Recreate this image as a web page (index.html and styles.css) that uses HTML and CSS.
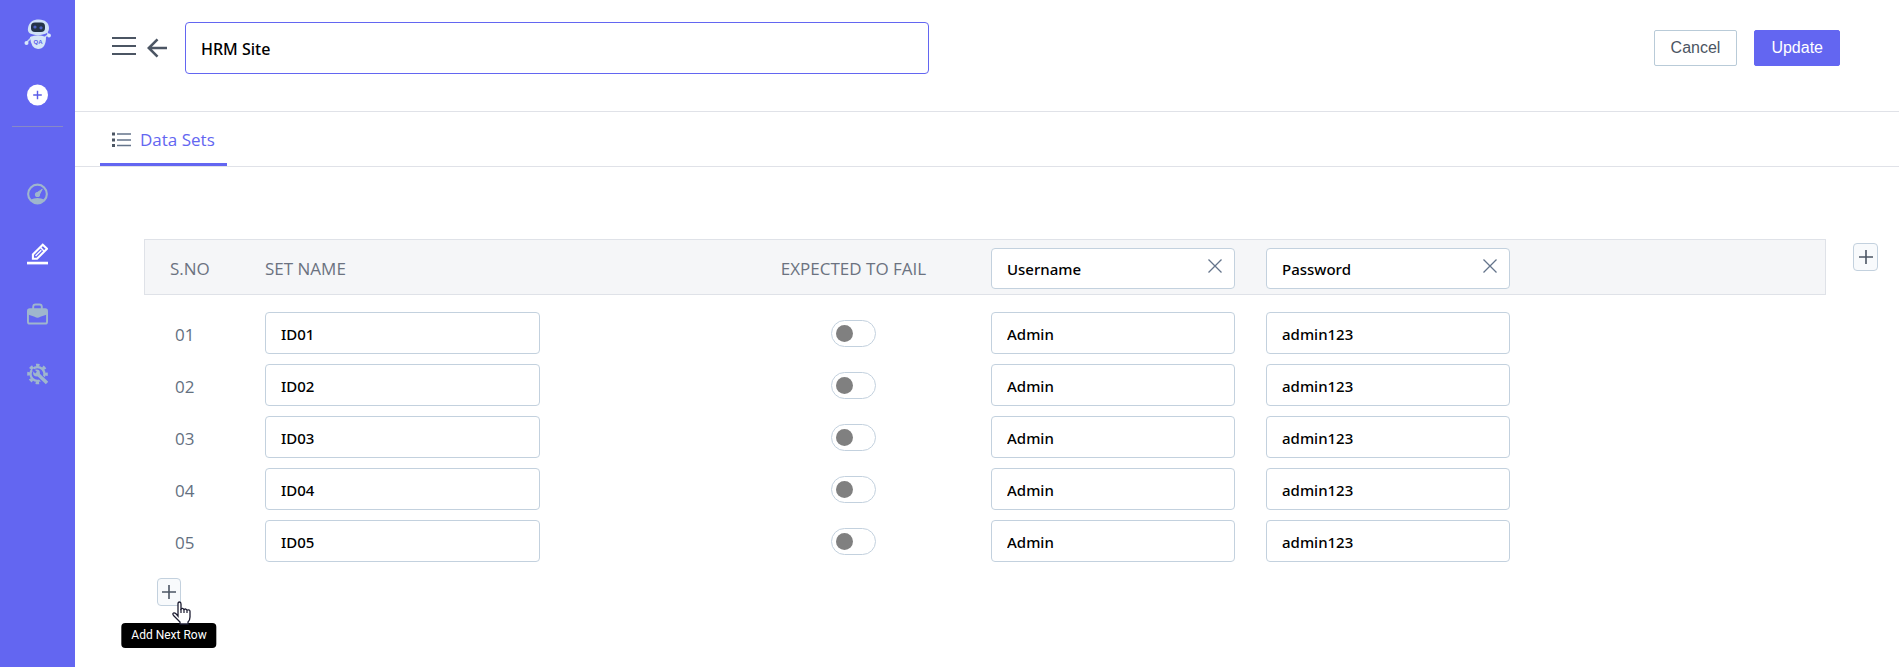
FILE: index.html
```html
<!DOCTYPE html>
<html lang="en">
<head>
<meta charset="utf-8">
<meta name="viewport" content="width=device-width, initial-scale=1">
<title>HRM Site - Data Sets</title>
<link rel="stylesheet" href="styles.css">
</head>
<body>
<div class="app">
  <nav class="sidebar" aria-label="Main">
    <a class="logo" href="#" aria-label="Home">
      <svg width="28" height="32" viewBox="0 0 28 32">
        <path d="M8 18 3 23M21 18l4-3" stroke="#c5d6f5" stroke-width="1.500" fill="none"/>
        <circle cx="2.500" cy="24" r="2" fill="#d9e8fa"/>
        <circle cx="25" cy="16.500" r="1.900" fill="#d9e8fa"/>
        <path d="M24 15l-1-2" stroke="#d9e8fa"/>
        <path d="M6 18Q14 14.500 22 18 22 30 14 30 7 30 6 18Z" fill="#d5e5f8"/>
        <path d="M4 9C5 3 9 .5 15 .5s10 3.500 10 8.500-4 7-11 7S3 14 4 9Z" fill="#cfe1f7"/>
        <rect x="7" y="3.500" width="14" height="9.500" rx="4" fill="#243447"/>
        <circle cx="11" cy="8" r="1.600" fill="#4d63c4"/>
        <circle cx="17" cy="8.800" r="1.600" fill="#4d63c4"/>
        <text class="logo-text" x="14" y="25" text-anchor="middle">QA</text>
      </svg>
    </a>
    <button class="create" type="button" aria-label="Create">
      <svg width="21" height="22" viewBox="0 0 22 22"><circle cx="11" cy="11" r="11" fill="#fff"/><path d="M11 6.500v9M6.500 11h9" stroke="#5a5de8" stroke-width="1.500"/></svg>
    </button>
    <div class="links">
      <a href="#" aria-label="Dashboard"><svg width="21" height="22" viewBox="0 0 22 22"><circle cx="11" cy="11" r="9.800" fill="none" stroke="currentColor" stroke-width="2.200"/><path d="M3.500 17Q11 13.500 18.500 17 15 21.500 11 21.500T3.500 17Z" fill="currentColor"/><circle cx="11" cy="11.500" r="2.700" fill="currentColor"/><path d="M10 10 16 6 12.500 12.500Z" fill="currentColor" stroke="currentColor"/></svg></a>
      <a class="current" href="#" aria-label="Edit"><svg width="21" height="22" viewBox="0 0 22 22"><path d="M6.200 16v-4.500L16.500 1.300 21 5.500 10.500 16Z" fill="none" stroke="currentColor" stroke-width="2.200"/><path d="m9 13 6-6M14 4l4 4" stroke="currentColor" stroke-width="1.500"/><path d="M0 20.500h22" stroke="currentColor" stroke-width="2.800"/></svg></a>
      <a href="#" aria-label="Projects"><svg width="21" height="22" viewBox="0 0 22 22"><path d="M6.500 6V3.500Q6.500 1 9 1h4q2.500 0 2.500 2.500V6" fill="none" stroke="currentColor" stroke-width="2"/><rect x="1" y="6" width="20" height="15" rx="2" fill="none" stroke="currentColor" stroke-width="2"/><path d="M1 6h20v5.500L14 14q-3 2-6 0l-7-2.500Z" fill="currentColor"/></svg></a>
      <a href="#" aria-label="Settings"><svg width="21" height="22" viewBox="0 0 22 22"><circle cx="11" cy="11" r="7.300" fill="none" stroke="currentColor" stroke-width="2.400"/><circle cx="11" cy="11" r="9.300" fill="none" stroke="currentColor" stroke-width="3" stroke-dasharray="3.650 3.650" stroke-dashoffset="1.800"/><path d="m11 11 10 10" stroke="#6366f1" stroke-width="6"/><path d="m10 10 11 10.500" stroke="currentColor" stroke-width="3.600"/><circle cx="10" cy="10" r="3.600" fill="currentColor"/><path d="M6 6l3.500 3.500" stroke="#6366f1" stroke-width="2.400"/></svg></a>
    </div>
  </nav>

  <main class="main">
    <header class="topbar">
      <button class="icon-btn" type="button" aria-label="Menu"><svg width="24" height="20" viewBox="0 0 24 20"><path d="M0 2h24M0 10h24M0 18h24" stroke="currentColor" stroke-width="2"/></svg></button>
      <a class="icon-btn back" href="#" aria-label="Back"><svg width="20" height="20" viewBox="0 0 20 20"><path d="M20 10H2M10.500 1.300 1.800 10l8.700 8.700" fill="none" stroke="currentColor" stroke-width="2.600"/></svg></a>
      <input class="field title" type="text" value="HRM Site" aria-label="Name">
      <div class="actions">
        <button class="btn" type="button">Cancel</button>
        <button class="btn primary" type="button">Update</button>
      </div>
    </header>

    <div class="tabs">
      <a class="tab" href="#"><svg width="19" height="15" viewBox="0 0 19 15"><path d="M0 2h3M0 8h3M0 13.500h3" stroke="#4b5563" stroke-width="3"/><path d="M5 2h14M5 8h14M5 13.500h14" stroke="#64748b" stroke-width="1.500"/></svg>Data Sets</a>
    </div>

    <section class="content">
      <div class="sheet">
        <table class="grid">
          <colgroup><col class="c-no"><col class="c-name"><col class="c-var"><col class="c-var"><col class="c-var"><col></colgroup>
          <thead>
            <tr>
              <th scope="col" class="no">S.NO</th>
              <th scope="col">SET NAME</th>
              <th scope="col" class="center">EXPECTED TO FAIL</th>
              <th scope="col"><div class="var"><input class="field" type="text" value="Username" aria-label="Column 1 name"><button class="remove" type="button" aria-label="Remove Username"><svg width="14" height="14" viewBox="0 0 14 14"><path d="m.5.5 13 13M13.500.5l-13 13" stroke="currentColor" stroke-width="1.300"/></svg></button></div></th>
              <th scope="col"><div class="var"><input class="field" type="text" value="Password" aria-label="Column 2 name"><button class="remove" type="button" aria-label="Remove Password"><svg width="14" height="14" viewBox="0 0 14 14"><path d="m.5.5 13 13M13.500.5l-13 13" stroke="currentColor" stroke-width="1.300"/></svg></button></div></th>
              <td></td>
            </tr>
          </thead>
          <tbody>
            <tr><td class="no">01</td><td><input class="field name" type="text" value="ID01" aria-label="Set name 01"></td><td class="center"><input class="toggle" type="checkbox" role="switch" aria-label="Expected to fail 01"></td><td><input class="field" type="text" value="Admin" aria-label="Username 01"></td><td><input class="field" type="text" value="admin123" aria-label="Password 01"></td><td></td></tr>
            <tr><td class="no">02</td><td><input class="field name" type="text" value="ID02" aria-label="Set name 02"></td><td class="center"><input class="toggle" type="checkbox" role="switch" aria-label="Expected to fail 02"></td><td><input class="field" type="text" value="Admin" aria-label="Username 02"></td><td><input class="field" type="text" value="admin123" aria-label="Password 02"></td><td></td></tr>
            <tr><td class="no">03</td><td><input class="field name" type="text" value="ID03" aria-label="Set name 03"></td><td class="center"><input class="toggle" type="checkbox" role="switch" aria-label="Expected to fail 03"></td><td><input class="field" type="text" value="Admin" aria-label="Username 03"></td><td><input class="field" type="text" value="admin123" aria-label="Password 03"></td><td></td></tr>
            <tr><td class="no">04</td><td><input class="field name" type="text" value="ID04" aria-label="Set name 04"></td><td class="center"><input class="toggle" type="checkbox" role="switch" aria-label="Expected to fail 04"></td><td><input class="field" type="text" value="Admin" aria-label="Username 04"></td><td><input class="field" type="text" value="admin123" aria-label="Password 04"></td><td></td></tr>
            <tr><td class="no">05</td><td><input class="field name" type="text" value="ID05" aria-label="Set name 05"></td><td class="center"><input class="toggle" type="checkbox" role="switch" aria-label="Expected to fail 05"></td><td><input class="field" type="text" value="Admin" aria-label="Username 05"></td><td><input class="field" type="text" value="admin123" aria-label="Password 05"></td><td></td></tr>
          </tbody>
        </table>
        <div class="add-row">
          <button class="add" type="button" aria-label="Add row" aria-describedby="add-tip"><svg width="14" height="14" viewBox="0 0 14 14"><path d="M7 0v14M0 7h14" stroke="currentColor" stroke-width="1.600"/></svg></button>
          <span class="tip" id="add-tip" role="tooltip">Add Next Row</span>
          <svg class="pointer" width="20" height="24" viewBox="0 0 20 24" aria-hidden="true"><path d="M6 15V3Q6 1 7.500 1T9 3v5q1.500-1.500 3 .5 2-1.300 3 .7 3-1 3 1.300V16q0 3-2 5v2H8v-2L2 15q-2-2-.5-3T6 15Z" fill="#fff" stroke="#1b1b30" stroke-width="1.300"/><path d="M9 8v4M12 8.500V12M15 9.500V12" stroke="#1b1b30" stroke-width="1.200"/></svg>
        </div>
      </div>
      <button class="add add-col" type="button" aria-label="Add column"><svg width="14" height="14" viewBox="0 0 14 14"><path d="M7 0v14M0 7h14" stroke="currentColor" stroke-width="1.600"/></svg></button>
    </section>
  </main>
</div>
</body>
</html>
```
FILE: styles.css
```css
* {
  box-sizing: border-box;
}

body {
  margin: 0;
  background: #fff;
  color: #4b5563;
  font-family: "Open Sans", "Noto Sans", sans-serif;
  font-size: 17px;
}

button {
  padding: 0;
  border: 0;
  background: none;
  color: inherit;
  cursor: pointer;
}

svg {
  display: block;
}

.app {
  display: flex;
  min-height: 100vh;
}

/* Sidebar */
.sidebar {
  flex: none;
  display: flex;
  flex-direction: column;
  align-items: center;
  width: 75px;
  padding-top: 19px;
  background: #6366f1;
}

.logo-text {
  fill: #5a5de8;
  font: bold 6px "Liberation Sans", sans-serif;
}

.create {
  margin-top: 33px;
}

.links {
  display: flex;
  flex-direction: column;
  align-items: center;
  gap: 38px;
  width: 51px;
  margin-top: 20px;
  padding-top: 56px;
  border-top: 1px solid #8789c6;
  color: #9fb6cd;
}

.links a {
  color: inherit;
}

.links .current {
  color: #fff;
}

/* Header */
.main {
  flex: 1;
  min-width: 0;
}

.topbar {
  display: flex;
  align-items: flex-start;
  height: 112px;
  padding: 22px 59px 0 37px;
  border-bottom: 1px solid #e0e2e8;
}

.icon-btn {
  margin-top: 14px;
  color: #4b5563;
}

.back {
  margin: 16px 18px 0 11px;
}

.actions {
  display: flex;
  gap: 17px;
  margin: 8px 0 0 auto;
}

.btn {
  height: 36px;
  padding: 0 16px;
  border: 1px solid #b9cbd8;
  border-radius: 2px;
  color: #4b5563;
  font: 16px "Liberation Sans", sans-serif;
}

.btn.primary {
  border-color: #6366f1;
  background: #6366f1;
  color: #fff;
}

/* Text fields */
.field {
  display: block;
  width: 244px;
  height: 42px;
  padding: 2px 15px 0;
  border: 1px solid #c3d1de;
  border-radius: 4px;
  background: #fff;
  color: #000;
  font: 500 15px "Noto Sans", "Open Sans", sans-serif;
}

.field.name {
  width: 275px;
}

.field.title {
  flex: 0 1 744px;
  min-width: 0;
  height: 52px;
  border-color: #6366f1;
  font-size: 16px;
}

/* Tabs */
.tabs {
  display: flex;
  padding-left: 25px;
  border-bottom: 1px solid #e0e2e8;
}

.tab {
  display: flex;
  align-items: center;
  gap: 9px;
  height: 54px;
  padding: 3px 12px 0;
  border-bottom: 3px solid #6366f1;
  color: #6366f1;
  font-weight: 500;
  text-decoration: none;
}

/* Data grid */
.content {
  display: flex;
  align-items: flex-start;
  gap: 27px;
  padding: 72px 21px 0 69px;
}

.sheet {
  flex: 1;
  min-width: 0;
}

.grid {
  width: 100%;
  border-collapse: separate;
  border-spacing: 0;
  table-layout: fixed;
}

.c-no {
  width: 121px;
}

.c-name {
  width: 451px;
}

.c-var {
  width: 275px;
}

.grid th,
.grid td {
  padding: 0;
  text-align: left;
}

.grid thead th,
.grid thead td {
  height: 56px;
  padding-top: 2px;
  border: solid #dfe2e8;
  border-width: 1px 0;
  background: #f5f6f8;
  color: #6b7280;
  font-weight: 500;
}

.grid thead .no {
  padding-left: 25px;
  border-left-width: 1px;
}

.grid thead td {
  border-right-width: 1px;
}

.grid tbody::before {
  content: "";
  display: block;
  height: 12px;
}

.grid tbody td {
  height: 52px;
}

.grid tbody .no {
  padding: 2px 0 0 31px;
  color: #64707f;
}

.grid .center {
  text-align: center;
}

.var {
  position: relative;
  width: 244px;
}

.var .field {
  height: 41px;
}

.remove {
  position: absolute;
  top: 11px;
  right: 13px;
  color: #64748b;
}

.toggle {
  appearance: none;
  display: block;
  width: 45px;
  height: 27px;
  margin: 0 auto;
  padding: 4px;
  border: 1px solid #c3d1de;
  border-radius: 14px;
  background: #fff;
}

.toggle::before {
  content: "";
  display: block;
  width: 17px;
  height: 17px;
  border-radius: 50%;
  background: #808080;
}

.toggle:checked::before {
  margin-left: auto;
  background: #6366f1;
}

.add {
  display: grid;
  place-items: center;
  width: 24px;
  height: 28px;
  border: 1px solid #c3d1de;
  border-radius: 4px;
  background: #f8fafc;
  color: #4b5563;
}

.add-col {
  flex: none;
  width: 25px;
  margin-top: 4px;
}

.add-row {
  position: relative;
  width: 24px;
  margin: 11px 0 0 13px;
}

.tip {
  position: absolute;
  top: 45px;
  left: 50%;
  transform: translateX(-50%);
  padding: 0 10px;
  border-radius: 4px;
  background: #000;
  color: #fff;
  font: 12px/25px Roboto, sans-serif;
  white-space: nowrap;
}

.pointer {
  position: absolute;
  top: 23px;
  left: 15px;
}
```
